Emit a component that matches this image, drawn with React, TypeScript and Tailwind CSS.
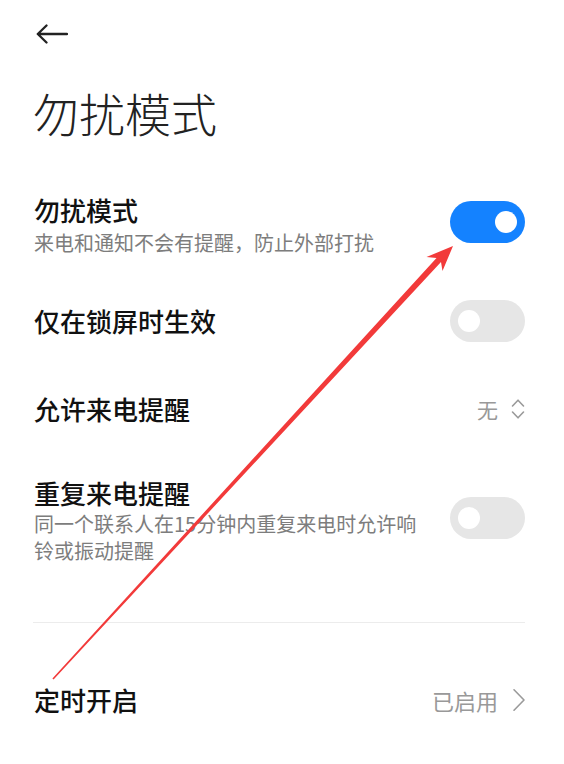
import React from "react";

const font = { fontFamily: '"Noto Sans CJK SC", "Noto Sans", sans-serif' };

const Toggle = ({ on }: { on: boolean }) => (
  <div
    className={`flex h-[42px] w-[75px] shrink-0 items-center rounded-full px-[8px] ${
      on ? "justify-end bg-[#1482ff]" : "justify-start bg-[#e6e6e6]"
    }`}
  >
    <div className="h-[22px] w-[22px] rounded-full bg-white" />
  </div>
);

const App: React.FC = () => {
  return (
    <div className="relative h-[764px] w-[564px] overflow-hidden bg-white" style={font}>
      {/* back */}
      <div className="pl-[36px] pt-[24px]">
        <svg width="32" height="20" viewBox="0 0 32 20" fill="none">
          <path
            d="M1.8 10H31 M10.5 1.5 L1.8 10 L10.5 18.5"
            stroke="#222"
            strokeWidth="2.3"
            strokeLinecap="round"
            strokeLinejoin="round"
          />
        </svg>
      </div>

      <h1 className="mt-[45px] pl-[33px] text-[46px] font-extralight leading-[46px] text-[#222]">
        勿扰模式
      </h1>

      <div className="pl-[34px] pr-[39px]">
        {/* do not disturb */}
        <div className="mt-[59px] flex items-start justify-between">
          <div>
            <div className="text-[26px] font-medium leading-[32px] text-[#111]">勿扰模式</div>
            <div className="mt-[3px] text-[20px] leading-[27px] text-[#7d7d7d]">
              来电和通知不会有提醒，防止外部打扰
            </div>
          </div>
          <div className="mt-[7px]">
            <Toggle on />
          </div>
        </div>

        {/* lock screen only */}
        <div className="mt-[44px] flex h-[42px] items-center justify-between">
          <div className="text-[26px] font-medium leading-[32px] text-[#111]">仅在锁屏时生效</div>
          <Toggle on={false} />
        </div>

        {/* allow calls */}
        <div className="mt-[46px] flex h-[42px] items-center justify-between">
          <div className="text-[26px] font-medium leading-[32px] text-[#111]">允许来电提醒</div>
          <div className="flex items-center gap-[13px]">
            <span className="text-[21px] leading-[28px] text-[#999]">无</span>
            <svg width="14" height="24" viewBox="0 0 14 24" fill="none">
              <path
                d="M1.5 9 L7 3.2 L12.5 9 M1.5 15 L7 20.8 L12.5 15"
                stroke="#9a9a9a"
                strokeWidth="1.6"
                strokeLinecap="round"
                strokeLinejoin="round"
              />
            </svg>
          </div>
        </div>

        {/* repeated calls */}
        <div className="mt-[47px] flex items-start justify-between">
          <div className="w-[392px]">
            <div className="text-[26px] font-medium leading-[32px] text-[#111]">重复来电提醒</div>
            <div className="mt-[1px] text-[20px] leading-[27px] text-[#7d7d7d]">
              同一个联系人在15分钟内重复来电时允许响铃或振动提醒
            </div>
          </div>
          <div className="mt-[20px]">
            <Toggle on={false} />
          </div>
        </div>

        <div className="-ml-[1px] mt-[58px] h-px bg-[#ececec]" />

        {/* schedule */}
        <div className="mt-[61px] flex h-[32px] items-center justify-between">
          <div className="text-[26px] font-medium leading-[32px] text-[#111]">定时开启</div>
          <div className="flex items-center gap-[14px]">
            <span className="text-[22px] leading-[28px] text-[#999]">已启用</span>
            <svg width="14" height="24" viewBox="0 0 14 24" fill="none" className="mr-[-1px]">
              <path
                d="M2 1.8 L12 12 L2 22.2"
                stroke="#9a9a9a"
                strokeWidth="1.6"
                strokeLinecap="round"
                strokeLinejoin="round"
              />
            </svg>
          </div>
        </div>
      </div>

      {/* red annotation arrow */}
      <svg
        className="pointer-events-none absolute left-0 top-0"
        width="564"
        height="764"
        viewBox="0 0 564 764"
      >
        <polygon
          points="453,246 442.5,271 441,262 53.6,679.5 52.4,678.5 436.5,258 426.5,257"
          fill="#f23a3a"
        />
      </svg>
    </div>
  );
};

export default App;
